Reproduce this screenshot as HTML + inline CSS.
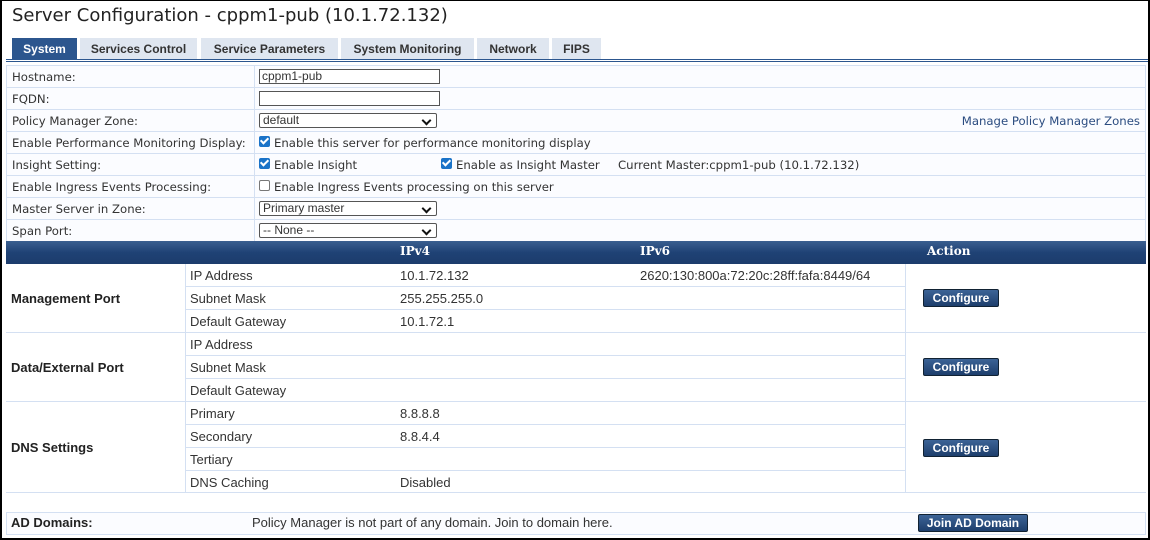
<!DOCTYPE html>
<html><head><style>
*{margin:0;padding:0;box-sizing:border-box}
body{width:1150px;height:540px;background:#fff;position:relative;overflow:hidden;font-family:"DejaVu Sans","Liberation Sans",sans-serif;color:#333}
.frame{position:absolute;left:0;top:0;width:1150px;height:540px;border:2px solid #000;border-top:1px solid #000;z-index:9;pointer-events:none}
.a{position:absolute;white-space:nowrap}
h1{position:absolute;left:12px;top:5px;font-size:18px;font-weight:normal;color:#222}
.tab{position:absolute;top:38px;height:21px;background:#dfe6f0;font:bold 12px "Liberation Sans",sans-serif;color:#333;text-align:center;line-height:22px}
.tab.on{background:#2c568e;color:#fff}
.fr{position:absolute;left:6px;width:1140px;height:22px;border:1px solid #d4e0f2;border-top:none;background:#fbfcff;font-size:11.7px;line-height:22px}
.fr .l{position:absolute;left:5px}
.fr .v{position:absolute;left:247px;top:0;height:21px;border-left:1px solid #d4e0f2;padding-left:4px}
.inp{display:inline-block;width:181px;height:15px;border:1px solid #555;background:#fff;font:12px "Liberation Sans",sans-serif;line-height:13px;padding-left:2px;vertical-align:middle;position:relative;top:-1px}
.sel{display:inline-block;width:178px;height:15px;border:1px solid #555;border-radius:2px;background:#fff;font:12px "Liberation Sans",sans-serif;line-height:13px;padding-left:3px;position:relative;vertical-align:middle;top:-1px}
.sel:after{content:"";position:absolute;right:6px;top:3px;width:5px;height:5px;border-right:2px solid #111;border-bottom:2px solid #111;transform:rotate(45deg)}
.cb{display:inline-block;width:11px;height:11px;border-radius:2px;background:#1a73c8;vertical-align:middle;position:relative;top:-2px;margin-right:4px}
.cb:after{content:"";position:absolute;left:3px;top:0px;width:3px;height:6px;border-right:2px solid #fff;border-bottom:2px solid #fff;transform:rotate(45deg)}
.cb.off{background:#fff;border:1px solid #777}
.cb.off:after{display:none}
.hd{position:absolute;left:6px;top:241px;width:1140px;height:23px;background:linear-gradient(#3a5f90,#1f4275 50%,#1c3c6c);font:bold 12px "DejaVu Serif","Liberation Serif",serif;color:#fff;line-height:21px}
.t{font:13px "Liberation Sans",sans-serif;color:#333}
.cell{position:absolute;border-bottom:1px solid #d4e0f2}
.btn{position:absolute;width:76px;height:18px;background:linear-gradient(#3c6396,#1d3e6c);border:1px solid #123;border-radius:2px;color:#fff;font:bold 12px "Liberation Sans",sans-serif;text-align:center;line-height:16px}
.b{font:bold 13px "Liberation Sans",sans-serif;color:#222}
</style></head><body>
<div class="frame"></div>
<h1>Server Configuration - cppm1-pub (10.1.72.132)</h1>
<div class="tab on" style="left:12px;width:65px">System</div>
<div class="tab" style="left:80px;width:117px">Services Control</div>
<div class="tab" style="left:201px;width:137px">Service Parameters</div>
<div class="tab" style="left:341px;width:133px">System Monitoring</div>
<div class="tab" style="left:477px;width:72px">Network</div>
<div class="tab" style="left:552px;width:49px">FIPS</div>
<div class="a" style="left:6px;top:59px;width:1142px;height:3px;border-top:1px solid #2c568e;border-bottom:1px solid #2c568e"></div>
<div class="fr" style="top:65px;height:23px;border-top:1px solid #d4e0f2"><span class="l">Hostname:</span><span class="v"><span class="inp">cppm1-pub</span></span></div>
<div class="fr" style="top:88px"><span class="l">FQDN:</span><span class="v"><span class="inp"></span></span></div>
<div class="fr" style="top:110px"><span class="l">Policy Manager Zone:</span><span class="v"><span class="sel">default</span></span><span class="a" style="right:5px;color:#2b4c80">Manage Policy Manager Zones</span></div>
<div class="fr" style="top:132px"><span class="l">Enable Performance Monitoring Display:</span><span class="v"><span class="cb"></span>Enable this server for performance monitoring display</span></div>
<div class="fr" style="top:154px"><span class="l">Insight Setting:</span><span class="v"><span class="cb"></span>Enable Insight<span class="a" style="left:186px"><span class="cb"></span>Enable as Insight Master</span><span class="a" style="left:363px">Current Master:cppm1-pub (10.1.72.132)</span></span></div>
<div class="fr" style="top:176px"><span class="l">Enable Ingress Events Processing:</span><span class="v"><span class="cb off"></span>Enable Ingress Events processing on this server</span></div>
<div class="fr" style="top:198px"><span class="l">Master Server in Zone:</span><span class="v"><span class="sel">Primary master</span></span></div>
<div class="fr" style="top:220px"><span class="l">Span Port:</span><span class="v"><span class="sel">-- None --</span></span></div>
<div class="hd"><span class="a" style="left:394px">IPv4</span><span class="a" style="left:634px">IPv6</span><span class="a" style="left:921px">Action</span></div>
<div class="a" style="left:185px;top:264px;height:229px;border-left:1px solid #d4e0f2"></div>
<div class="a" style="left:905px;top:264px;height:229px;border-left:1px solid #d4e0f2"></div>
<div class="cell" style="left:6px;top:264px;width:1140px;height:69px"></div>
<div class="cell" style="left:6px;top:333px;width:1140px;height:69px"></div>
<div class="cell" style="left:6px;top:402px;width:1140px;height:91px"></div>
<div class="cell" style="left:185px;top:264px;width:720px;height:23px"></div>
<div class="cell" style="left:185px;top:287px;width:720px;height:23px"></div>
<div class="cell" style="left:185px;top:333px;width:720px;height:23px"></div>
<div class="cell" style="left:185px;top:356px;width:720px;height:23px"></div>
<div class="cell" style="left:185px;top:402px;width:720px;height:23px"></div>
<div class="cell" style="left:185px;top:425px;width:720px;height:23px"></div>
<div class="cell" style="left:185px;top:448px;width:720px;height:23px"></div>
<div class="t">
<span class="a b" style="left:11px;top:291px">Management Port</span>
<span class="a" style="left:190px;top:268px">IP Address</span><span class="a" style="left:400px;top:268px">10.1.72.132</span><span class="a" style="left:640px;top:268px">2620:130:800a:72:20c:28ff:fafa:8449/64</span>
<span class="a" style="left:190px;top:291px">Subnet Mask</span><span class="a" style="left:400px;top:291px">255.255.255.0</span>
<span class="a" style="left:190px;top:314px">Default Gateway</span><span class="a" style="left:400px;top:314px">10.1.72.1</span>
<span class="a b" style="left:11px;top:360px">Data/External Port</span>
<span class="a" style="left:190px;top:337px">IP Address</span>
<span class="a" style="left:190px;top:360px">Subnet Mask</span>
<span class="a" style="left:190px;top:383px">Default Gateway</span>
<span class="a b" style="left:11px;top:440px">DNS Settings</span>
<span class="a" style="left:190px;top:406px">Primary</span><span class="a" style="left:400px;top:406px">8.8.8.8</span>
<span class="a" style="left:190px;top:429px">Secondary</span><span class="a" style="left:400px;top:429px">8.8.4.4</span>
<span class="a" style="left:190px;top:452px">Tertiary</span>
<span class="a" style="left:190px;top:475px">DNS Caching</span><span class="a" style="left:400px;top:475px">Disabled</span>
</div>
<div class="btn" style="left:923px;top:289px">Configure</div>
<div class="btn" style="left:923px;top:358px">Configure</div>
<div class="btn" style="left:923px;top:439px">Configure</div>
<div class="a" style="left:6px;top:512px;width:1140px;height:23px;border:1px solid #d4e0f2;background:#fbfcff"></div>
<span class="a b" style="left:11px;top:515px">AD Domains:</span>
<span class="a t" style="left:252px;top:515px">Policy Manager is not part of any domain. Join to domain here.</span>
<div class="btn" style="left:918px;top:514px;width:110px">Join AD Domain</div>
</body></html>
